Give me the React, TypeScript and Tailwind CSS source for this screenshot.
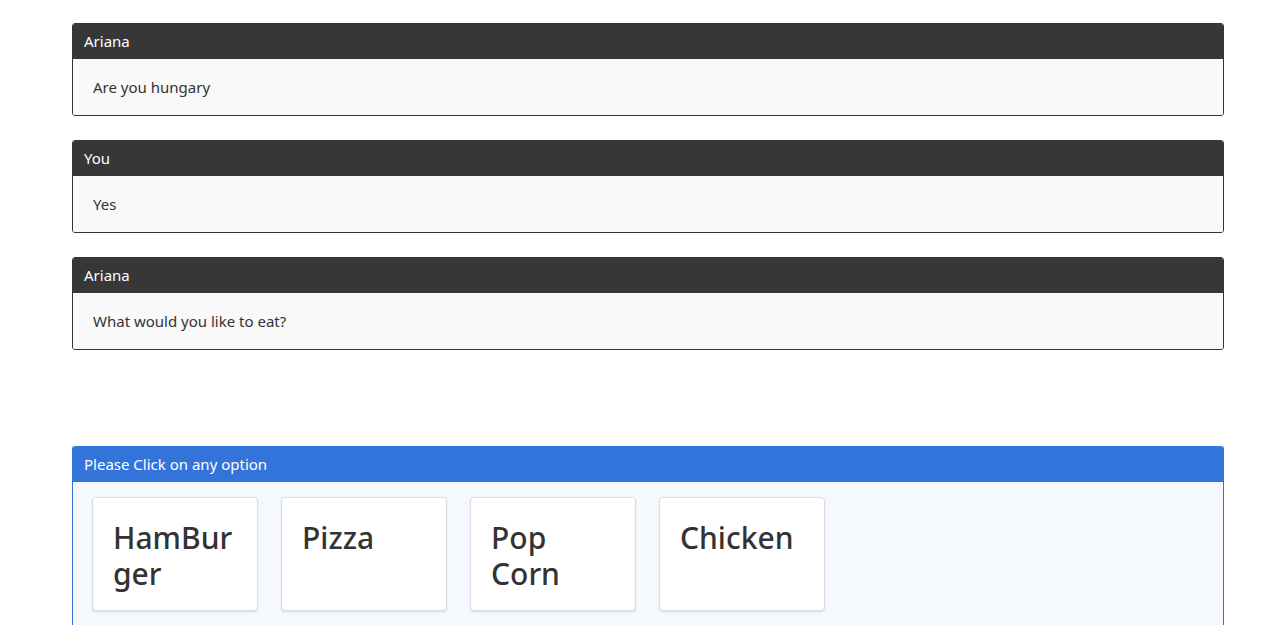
const messages = [
  { from: 'Ariana', text: 'Are you hungary' },
  { from: 'You', text: 'Yes' },
  { from: 'Ariana', text: 'What would you like to eat?' },
];

const options = ['HamBurger', 'Pizza', 'Pop Corn', 'Chicken'];

export default function App() {
  return (
    <div
      className="min-h-screen bg-white pt-[23px] text-[#333]"
      style={{ fontFamily: '"Noto Sans", "Open Sans", sans-serif' }}
    >
      <div className="ml-[72px] w-[1152px]">
        {messages.map((m, i) => (
          <div key={i} className="mb-[24px] overflow-hidden rounded-[3px] border border-[#333]">
            <div className="flex h-[35px] items-center bg-[#373737] px-[11px] text-[15px] text-white">{m.from}</div>
            <div className="flex h-[56px] items-center bg-[#f9f9f9] px-[20px] text-[15px]">{m.text}</div>
          </div>
        ))}

        <div className="mt-[96px] overflow-hidden rounded-t-[3px] border border-b-0 border-[#3374db]">
          <div className="flex h-[35px] items-center bg-[#3374db] px-[11px] text-[15px] text-white">
            Please Click on any option
          </div>
          <div className="flex gap-[23px] bg-[#f5f9fe] px-[19px] pt-[15px] pb-[20px]">
            {options.map((o) => (
              <div
                key={o}
                className="w-[166px] cursor-pointer break-words rounded-[4px] border border-[#d8dde3] bg-white px-[20px] pt-[22px] pb-[18px] text-left text-[30px] leading-[36px] font-medium text-[#333] shadow-[0_1px_2px_rgba(0,0,0,0.12)]"
              >
                {o}
              </div>
            ))}
          </div>
        </div>
      </div>
    </div>
  );
}
